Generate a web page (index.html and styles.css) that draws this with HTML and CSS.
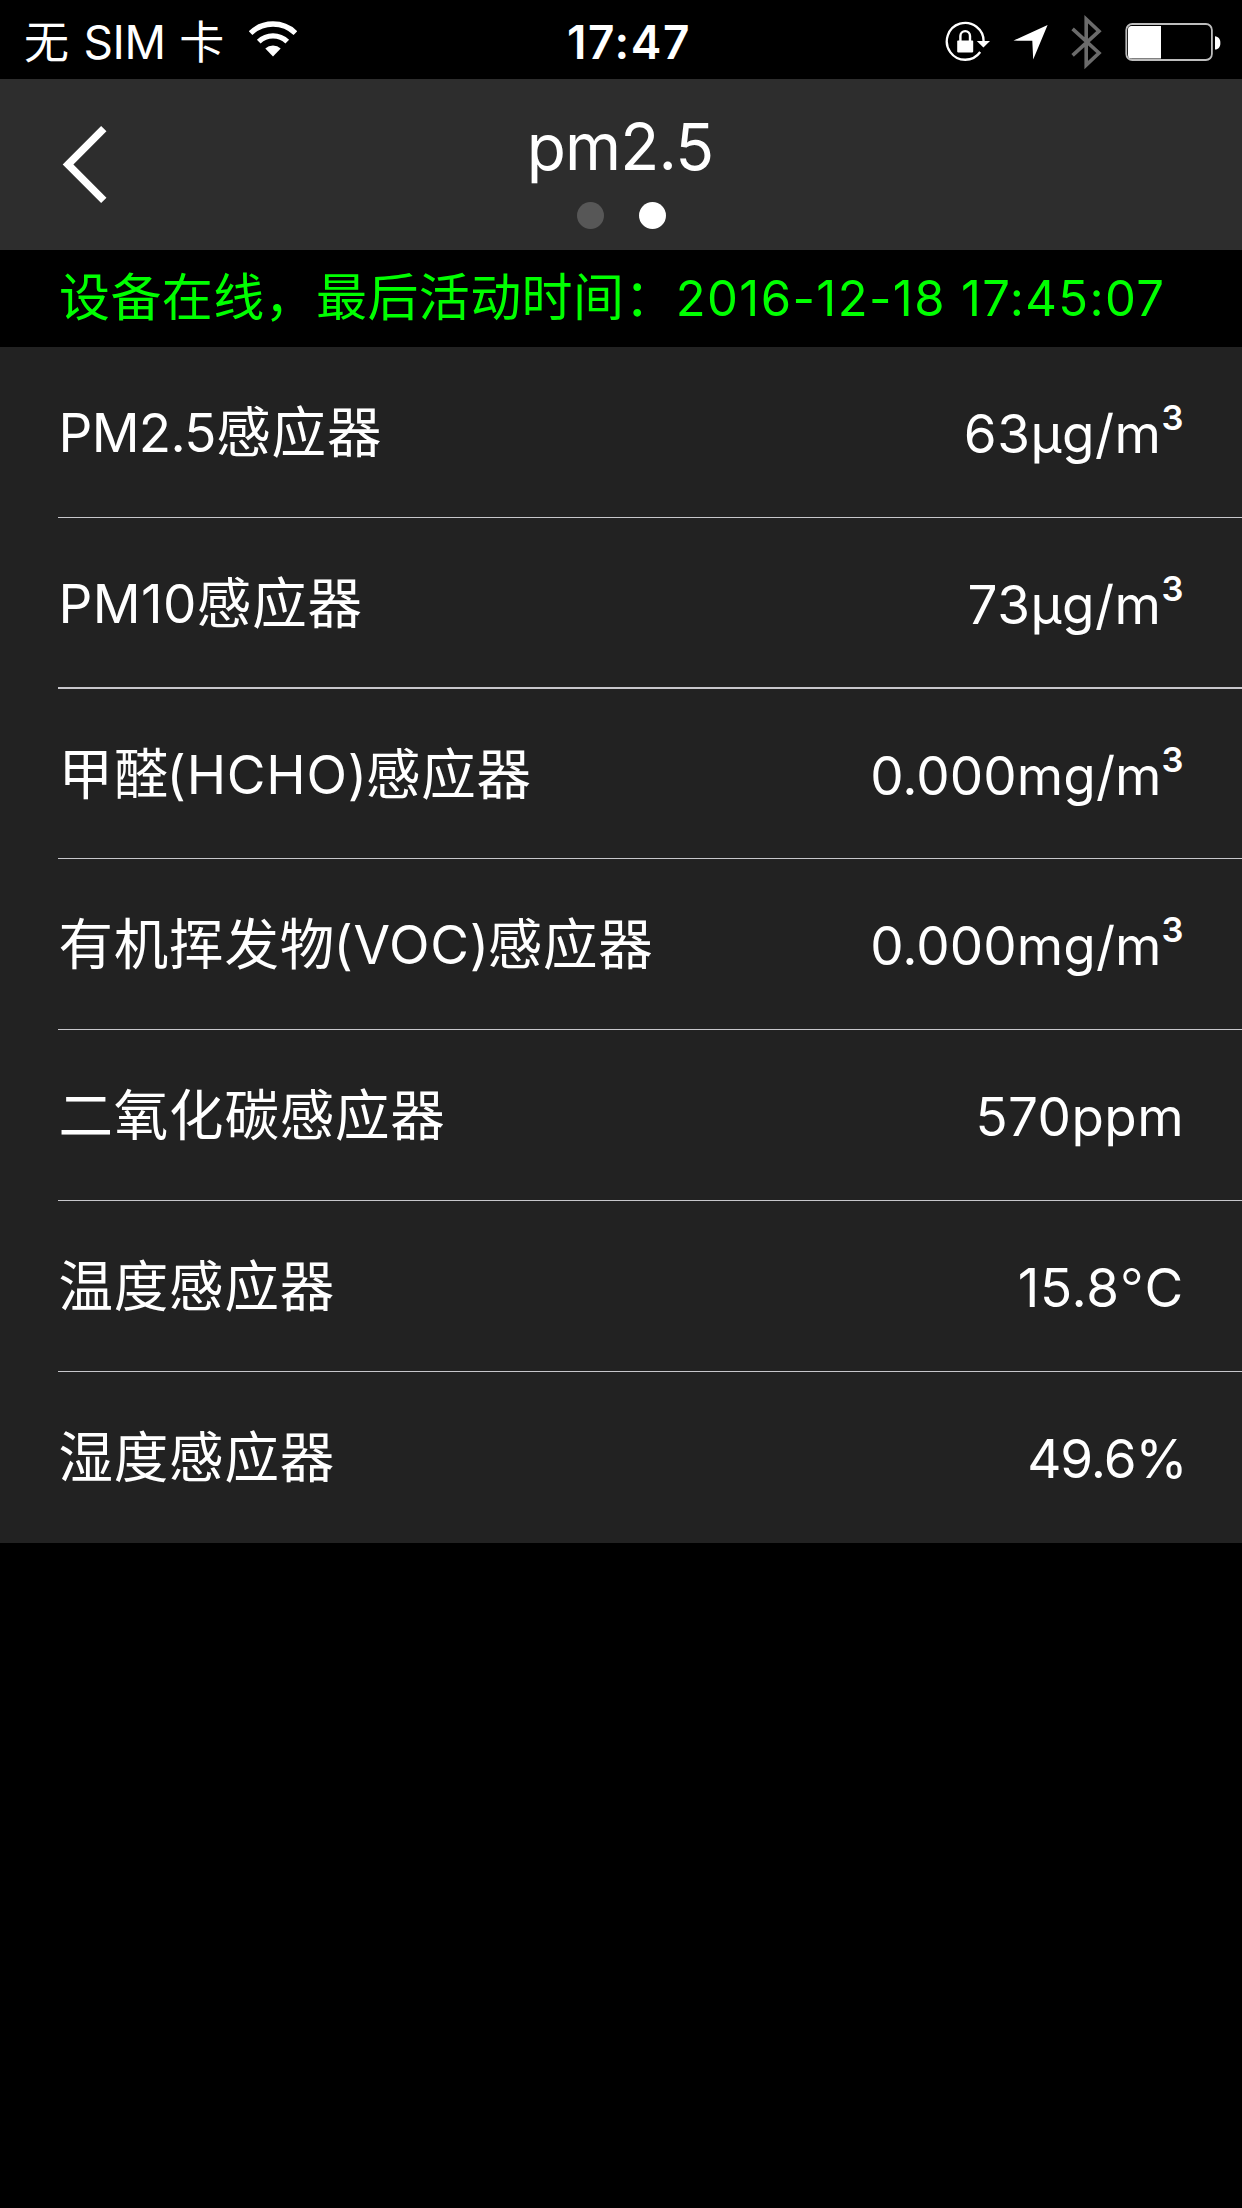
FILE: index.html
```html
<!DOCTYPE html>
<html lang="zh-CN">
<head>
<meta charset="utf-8">
<title>pm2.5</title>
<link rel="stylesheet" href="styles.css">
</head>
<body>
<div class="statusbar">
  <div class="carrier">
    <span class="carrier-name">无 <span class="sim">SIM</span> 卡</span>
    <svg class="wifi" width="48" height="36" viewBox="0 0 48 36">
      <path d="M1.55 12.1A32.3 32.3 0 0 1 46.45 12.1M9.75 20.6A20.5 20.5 0 0 1 38.25 20.6" fill="none" stroke="#fff" stroke-width="5.3"/>
      <path d="M24 35.5L16.3 27.5A11.1 11.1 0 0 1 31.7 27.5Z" fill="#fff"/>
    </svg>
  </div>
  <div class="clock">17:47</div>
  <div class="indicators">
    <svg class="lock" width="46" height="40" viewBox="0 0 46 40">
      <path d="M38.6 21A18.4 18.4 0 1 0 35.2 31" fill="none" stroke="#fff" stroke-width="2.3"/>
      <path d="M31.8 20H45L38.4 26.6Z" fill="#fff"/>
      <rect x="12.2" y="19.6" width="16" height="11.8" rx="0.8" fill="#fff"/>
      <path d="M15.4 20V14.9A4.8 4.8 0 0 1 25 14.9V20" fill="none" stroke="#fff" stroke-width="2.4"/>
    </svg>
    <svg width="35" height="36" viewBox="0 0 35 36">
      <path d="M0.5 16.6L34.6 1L20.2 35.6L19.3 16.8Z" fill="#fff"/>
    </svg>
    <svg width="31" height="56" viewBox="0 0 31 56">
      <path d="M1.6 14.8L28 39L15.2 51V5.2L28 17.2L1.6 41.4" fill="none" stroke="#6b6b6b" stroke-width="3.6"/>
    </svg>
    <svg width="96" height="38" viewBox="0 0 96 38">
      <rect x="1.3" y="1" width="85.6" height="36" rx="6" fill="none" stroke="#bdbdbd" stroke-width="1.8"/>
      <path d="M36 3V35.6H6.5A3.5 3.5 0 0 1 3 32.1V6.5A3.5 3.5 0 0 1 6.5 3Z" fill="#fff"/>
      <path d="M90 13.2C93.4 13.6 95.4 16 95.4 19.9S93.4 26.2 90 26.6Z" fill="#fff"/>
    </svg>
  </div>
</div>

<header class="header">
  <svg class="back" width="46" height="80" viewBox="0 0 46 80">
    <path d="M42.8 3.6L7 39.5L42.8 75.4" fill="none" stroke="#fff" stroke-width="7.5"/>
  </svg>
  <div class="heading">
    <h1 class="title">pm2.5</h1>
    <div class="pager"><span class="dot"></span><span class="dot active"></span></div>
  </div>
</header>

<div class="notice">设备在线，最后活动时间：<span class="timestamp">2016-12-18 17:45:07</span></div>

<main class="list">
  <div class="row"><div class="label"><span class="latin pm25">PM2.5</span>感应器</div><div class="value">63µg/m<sup>3</sup></div></div>
  <div class="row thick"><div class="label"><span class="latin pm10">PM10</span>感应器</div><div class="value">73µg/m<sup>3</sup></div></div>
  <div class="row short"><div class="label">甲醛<span class="latin hcho">(HCHO)</span>感应器</div><div class="value mg">0.000mg/m<sup>3</sup></div></div>
  <div class="row"><div class="label">有机挥发物<span class="latin voc">(VOC)</span>感应器</div><div class="value mg">0.000mg/m<sup>3</sup></div></div>
  <div class="row"><div class="label">二氧化碳感应器</div><div class="value ppm">570ppm</div></div>
  <div class="row"><div class="label">温度感应器</div><div class="value celsius">15.8<span class="degree">°</span>C</div></div>
  <div class="row last"><div class="label">湿度感应器</div><div class="value percent">49.6%</div></div>
</main>
</body>
</html>
```
FILE: styles.css
```css
* { box-sizing: border-box; }
body {
  margin: 0;
  min-height: 2208px;
  background: #000;
  color: #fff;
  font-family: Inter, "Noto Sans CJK SC", sans-serif;
  font-weight: 400;
}
svg { display: block; flex: none; }

.statusbar {
  height: 79px;
  display: grid;
  grid-template-columns: 1fr auto 1fr;
  font-size: 46px;
  line-height: 74px;
}
.carrier { display: flex; padding-left: 24px; }
.carrier-name { padding-top: 5px; font-size: 45px; white-space: nowrap; letter-spacing: 0.9px; }
.sim { font-size: 46px; letter-spacing: -0.4px; }
.wifi { margin: 21px 0 0 23.5px; }
.clock { padding: 5px 0 0 16px; font-weight: 600; letter-spacing: 1.6px; }
.indicators {
  display: flex;
  justify-content: flex-end;
  align-items: center;
  gap: 23px;
  padding: 3px 21px 0 0;
}
.lock { margin: 0 -1px 2px 0; }

.header {
  height: 171px;
  display: grid;
  grid-template-columns: 1fr auto 1fr;
  background: #2d2d2d;
}
.back { margin: 46px 0 0 61px; }
.heading { padding-top: 28px; }
.title {
  margin: 0 2px 0 0;
  font-size: 64px;
  line-height: 80px;
  font-weight: 400;
  letter-spacing: -0.8px;
}
.pager { display: flex; justify-content: center; gap: 35px; margin: 15px 0 0 1px; }
.dot { width: 27px; height: 27px; border-radius: 50%; background: #575757; }
.dot.active { background: #fff; }

.notice {
  height: 97px;
  padding-left: 59px;
  color: #0f0;
  font-size: 51px;
  line-height: 96px;
  letter-spacing: 0.4px;
  white-space: nowrap;
}
.timestamp { font-size: 49px; letter-spacing: 1.38px; }

.list { background: #222; }
.row {
  height: 171px;
  margin-left: 58px;
  padding-right: 58px;
  display: flex;
  justify-content: space-between;
  border-bottom: 1px solid #c8c7cc;
  line-height: 80px;
  white-space: nowrap;
}
.row.thick { border-bottom-width: 2px; }
.row.short { height: 170px; }
.row.last { border-bottom: 0; }
.label { padding: 45px 0 0 0.5px; font-size: 54.5px; letter-spacing: 0.8px; }
.latin { font-size: 53px; }
.pm25 { letter-spacing: -0.7px; margin-right: 0.5px; }
.pm10 { letter-spacing: 0.4px; }
.hcho { letter-spacing: 0.8px; margin: 0 -2px 0 -2.6px; }
.voc { letter-spacing: 0.7px; margin: 0 -2px 0 -1.5px; }
.value { padding-top: 47px; font-size: 53px; letter-spacing: 0.5px; }
.value sup {
  margin-right: 0.5px;
  font-size: 34.5px;
  font-weight: 600;
  line-height: 0;
  letter-spacing: 0;
  vertical-align: 23px;
}
.value.mg { letter-spacing: 0.06px; }
.value.ppm { letter-spacing: 0.4px; }
.value.celsius { letter-spacing: 0.7px; }
.degree { font-weight: 300; }
.value.percent { margin-right: -2.5px; letter-spacing: -1.05px; }
```
